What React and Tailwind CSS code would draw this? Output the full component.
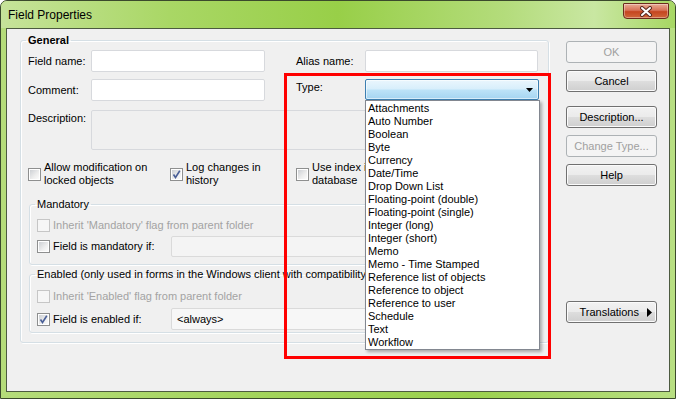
import React from 'react';

const ITEMS = [
  'Attachments',
  'Auto Number',
  'Boolean',
  'Byte',
  'Currency',
  'Date/Time',
  'Drop Down List',
  'Floating-point (double)',
  'Floating-point (single)',
  'Integer (long)',
  'Integer (short)',
  'Memo',
  'Memo - Time Stamped',
  'Reference list of objects',
  'Reference to object',
  'Reference to user',
  'Schedule',
  'Text',
  'Workflow',
];

function Checkbox({ checked, disabled }) {
  return (
    <span
      className={`relative flex w-[13px] h-[13px] shrink-0 border ${
        disabled ? 'border-[#c6c6c6] bg-[#f6f6f6]' : 'border-[#8e8f8f] bg-white'
      }`}
    >
      {!disabled && (
        <span className="m-[1px] flex-1 bg-[linear-gradient(135deg,#cdd0d4_0%,#eeeeee_60%,#fbfbfb_100%)]" />
      )}
      {checked && (
        <svg className="absolute left-0 top-0" width="11" height="11" viewBox="0 0 11 11">
          <path d="M2.5 5.5 L4.5 8.5 L8.8 1.8" fill="none" stroke="#4a5f97" strokeWidth="1.6" />
        </svg>
      )}
    </span>
  );
}

function Btn({ children, disabled, className = '' }) {
  return (
    <div
      className={`h-[22px] w-[91px] rounded-[3px] border flex items-center justify-center ${
        disabled
          ? 'border-[#adb2b5] bg-[#f4f4f4] text-[#a0a0a0]'
          : 'border-[#707070] bg-[linear-gradient(#f2f2f2_0%,#ebebeb_48%,#dddddd_52%,#cfcfcf_100%)] shadow-[inset_0_0_0_1px_#fbfbfb]'
      } ${className}`}
    >
      {children}
    </div>
  );
}

function Input({ className = '' }) {
  return <div className={`h-[22px] bg-white border border-[#d7d9dd] rounded-[2px] ${className}`} />;
}

export default function App() {
  return (
    <div className="relative w-[676px] h-[399px] flex flex-col overflow-hidden rounded-t-[7px] border border-[#3b4a2c] bg-[linear-gradient(90deg,#b5dc7a_0%,#a2d45a_40%,#9bd14e_70%,#b8df82_100%)] font-['Liberation_Sans',Arial,sans-serif] text-[11px] leading-[13px] text-black">
      {/* title bar */}
      <div className="h-[27px] shrink-0 flex items-start bg-[linear-gradient(90deg,#c6e39a_0%,#a9d765_25%,#98cf48_50%,#b4dc7c_75%,#c9e7a2_88%,#a7d763_100%)]">
        <span className="ml-[7px] mt-[7px] text-[12px] leading-[15px]">Field Properties</span>
        <div className="ml-auto mr-[6px] mt-[2px] w-[46px] h-[16px] flex items-center justify-center rounded-b-[4px] rounded-t-[1px] border border-[#6b2b1c] bg-[linear-gradient(#e8ac95_0%,#d77257_45%,#c5451f_55%,#d0673a_100%)] shadow-[inset_0_0_0_1px_rgba(255,255,255,0.35)]">
          <svg width="14" height="11" viewBox="0 0 14 11">
            <path d="M3 2 L11 9 M11 2 L3 9" stroke="#5a2a20" strokeWidth="4" strokeLinecap="round" />
            <path d="M3 2 L11 9 M11 2 L3 9" stroke="#ffffff" strokeWidth="2" strokeLinecap="round" />
          </svg>
        </div>
      </div>

      {/* client area */}
      <div className="mx-[5px] h-[364px] shrink-0 border border-[#4c5a40] bg-[#f0f0f0] flex items-start pl-[13px] pt-[5px]">
        {/* General group */}
        <fieldset className="w-[529px] min-w-0 border border-[#d5dfe5] rounded-[3px] pl-[7px] pr-[9px] pt-[3px] pb-[9px] shadow-[inset_1px_1px_0_#ffffff,1px_1px_0_#ffffff]">
          <legend className="-ml-[2px] px-[2px] font-bold leading-[13px]">General</legend>

          <div className="flex items-center h-[22px]">
            <span className="w-[63px]">Field name:</span>
            <Input className="w-[174px]" />
            <span className="ml-[31px] w-[69px]">Alias name:</span>
            <Input className="w-[173px]" />
          </div>

          <div className="mt-[7px] flex items-center h-[22px]">
            <span className="w-[63px]">Comment:</span>
            <Input className="w-[174px]" />
            <span className="ml-[31px] w-[69px] self-start pt-[2px]">Type:</span>
            <div className="relative self-start w-[174px] h-[21px]">
              <div className="h-full flex items-center justify-end pr-[5px] rounded-[2px] border border-[#3c7fb1] bg-[linear-gradient(#eaf6fd_0%,#d7eefb_48%,#bde3f8_52%,#a5d4f1_100%)] shadow-[inset_0_0_0_1px_rgba(255,255,255,0.55)]">
                <svg width="7" height="4" viewBox="0 0 7 4">
                  <path d="M0 0 H7 L3.5 4 Z" fill="#000" />
                </svg>
              </div>
              {/* open list */}
              <div className="absolute left-0 top-[21px] z-10 w-[175px] bg-white border border-[#828790] pt-[1px] shadow-[2px_2px_3px_rgba(0,0,0,0.3)]">
                {ITEMS.map((it) => (
                  <div key={it} className="pl-[2px] h-[13px] leading-[13px] whitespace-nowrap">
                    {it}
                  </div>
                ))}
              </div>
            </div>
          </div>

          <div className="mt-[9px] flex items-start">
            <span className="w-[63px] pt-[2px]">Description:</span>
            <div className="w-[447px] h-[40px] border border-[#d7d9dd] rounded-[2px] bg-[#f0f0f0]" />
          </div>

          <div className="mt-[11px] flex items-center h-[26px]">
            <div className="w-[142px] flex items-center gap-[3px]">
              <Checkbox />
              <span>
                Allow modification on
                <br />
                locked objects
              </span>
            </div>
            <div className="w-[126px] flex items-center gap-[3px]">
              <Checkbox checked />
              <span>
                Log changes in
                <br />
                history
              </span>
            </div>
            <div className="w-[69px] flex items-center gap-[3px] overflow-hidden">
              <Checkbox />
              <span className="whitespace-nowrap">
                Use index in
                <br />
                database
              </span>
            </div>
          </div>

          {/* Mandatory */}
          <fieldset className="mt-[11px] ml-[1px] min-w-0 border border-[#d5dfe5] rounded-[3px] pl-[7px] pr-[8px] pt-[6px] pb-[7px] shadow-[inset_1px_1px_0_#ffffff,1px_1px_0_#ffffff]">
            <legend className="-ml-[2px] px-[2px] leading-[13px]">Mandatory</legend>
            <div className="h-[16px] flex items-center gap-[3px] text-[#a3a3a3]">
              <Checkbox disabled />
              <span>Inherit 'Mandatory' flag from parent folder</span>
            </div>
            <div className="mt-[3px] h-[21px] flex items-center">
              <div className="w-[134px] flex items-center gap-[3px]">
                <Checkbox />
                <span>Field is mandatory if:</span>
              </div>
              <div className="flex-1 h-[21px] border border-[#dadada] rounded-[2px] bg-[#f4f4f4]" />
            </div>
          </fieldset>

          {/* Enabled */}
          <fieldset className="mt-[3px] ml-[1px] min-w-0 border border-[#d5dfe5] rounded-[3px] pl-[7px] pr-[8px] pt-[7px] pb-[2px] shadow-[inset_1px_1px_0_#ffffff,1px_1px_0_#ffffff]">
            <legend className="-ml-[2px] pl-[2px] w-[330px] overflow-hidden leading-[13px] whitespace-nowrap">
              Enabled (only used in forms in the Windows client with compatibility level)
            </legend>
            <div className="h-[16px] flex items-center gap-[3px] text-[#a3a3a3]">
              <Checkbox disabled />
              <span>Inherit 'Enabled' flag from parent folder</span>
            </div>
            <div className="mt-[4px] h-[22px] flex items-center">
              <div className="w-[134px] flex items-center gap-[3px]">
                <Checkbox checked />
                <span>Field is enabled if:</span>
              </div>
              <div className="flex-1 h-[22px] flex items-center pl-[5px] border border-[#dadada] rounded-[2px] bg-[#f7f7f7]">
                &lt;always&gt;
              </div>
            </div>
          </fieldset>
        </fieldset>

        {/* buttons */}
        <div className="ml-[17px] mt-[7px] flex flex-col">
          <Btn disabled>OK</Btn>
          <Btn className="mt-[7px]">Cancel</Btn>
          <Btn className="mt-[14px]">Description...</Btn>
          <Btn disabled className="mt-[7px]">Change Type...</Btn>
          <Btn className="mt-[7px]">Help</Btn>
          <Btn className="mt-[115px] !justify-end pr-[4px] gap-[8px]">
            <span>Translations</span>
            <svg width="5" height="9" viewBox="0 0 5 9">
              <path d="M0 0 L5 4.5 L0 9 Z" fill="#000" />
            </svg>
          </Btn>
        </div>
      </div>

      {/* red annotation frame */}
      <div className="pointer-events-none absolute left-[283px] top-[72px] z-20 w-[267px] h-[286px] border-[3px] border-[#ff0000]" />
    </div>
  );
}
